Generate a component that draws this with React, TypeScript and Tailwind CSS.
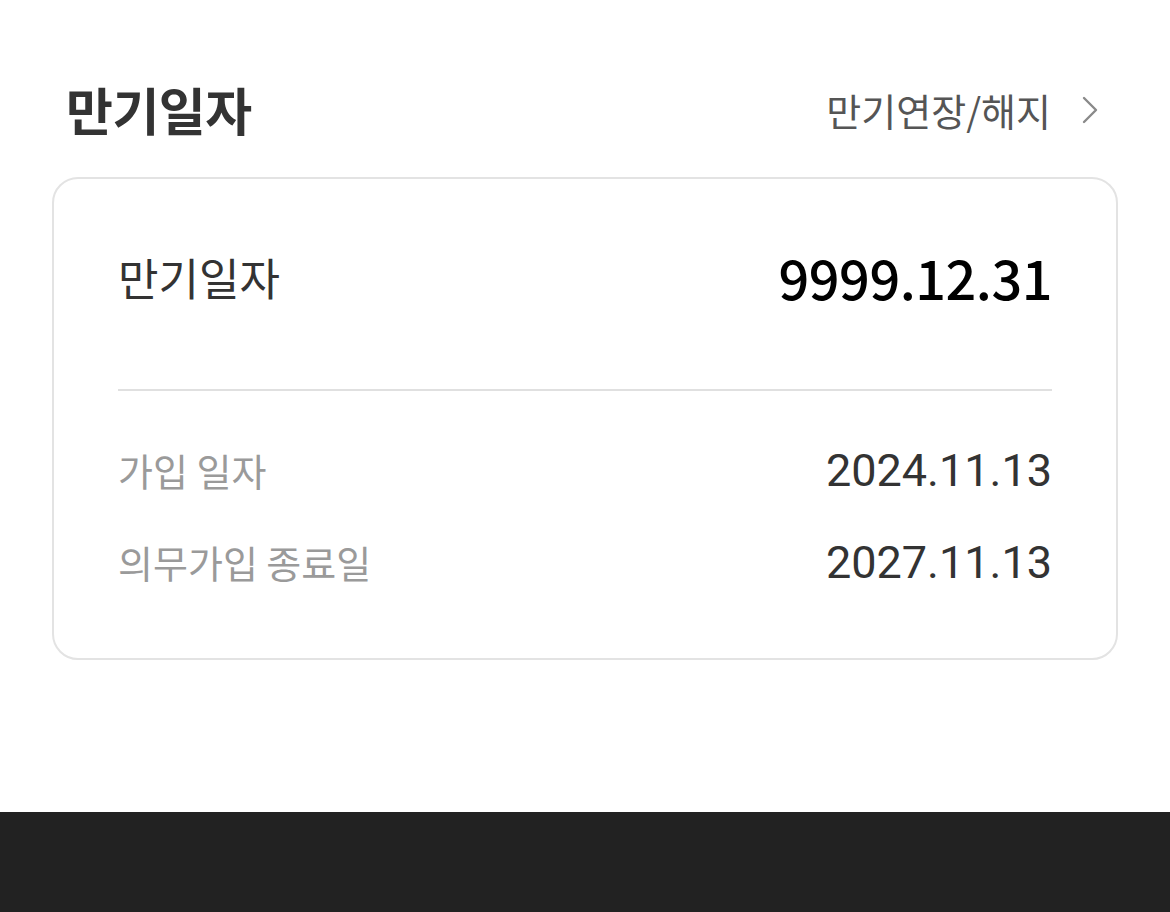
export default function App() {
  return (
    <div
      className="w-[1170px] h-[912px] bg-white flex flex-col"
      style={{ fontFamily: '"Noto Sans CJK KR", "Noto Sans", sans-serif' }}
    >
      <div className="flex-1 px-[52px] pt-[67px]">
        <div className="h-[85px] flex items-center justify-between pl-[14px] pr-[20px]">
          <h2 className="text-[51px] font-bold text-[#333] leading-none tracking-[-0.5px]">
            만기일자
          </h2>
          <button className="flex items-center gap-[31px] text-[#555]">
            <span className="text-[38px] leading-none">만기연장/해지</span>
            <svg width="16" height="28" viewBox="0 0 16 28" fill="none">
              <path
                d="M2 2 L14 14 L2 26"
                stroke="#8a8a8a"
                strokeWidth="2.4"
                strokeLinecap="round"
                strokeLinejoin="round"
              />
            </svg>
          </button>
        </div>

        <div className="mt-[25px] border-2 border-[#e3e3e3] rounded-[26px] px-[64px] pt-[70px] pb-[71px]">
          <div className="h-[56px] flex items-center justify-between">
            <span className="text-[44px] text-[#333] leading-none">만기일자</span>
            <span className="text-[54px] font-medium text-black leading-none tracking-[-0.5px]">
              9999.12.31
            </span>
          </div>

          <div className="mt-[84px] h-[2px] bg-[#e0e0e0]" />

          <div className="mt-[54px] flex flex-col gap-[42px]">
            <Row label="가입 일자" value="2024.11.13" />
            <Row label="의무가입 종료일" value="2027.11.13" />
          </div>
        </div>
      </div>

      <div className="h-[100px] bg-[#222222]" />
    </div>
  );
}

function Row({ label, value }: { label: string; value: string }) {
  return (
    <div className="h-[50px] flex items-center justify-between">
      <span className="text-[38px] text-[#9a9a9a] leading-none">{label}</span>
      <span
        className="text-[45px] text-[#333] leading-none"
        style={{ fontFamily: 'Roboto, "Noto Sans CJK KR", sans-serif' }}
      >
        {value}
      </span>
    </div>
  );
}
